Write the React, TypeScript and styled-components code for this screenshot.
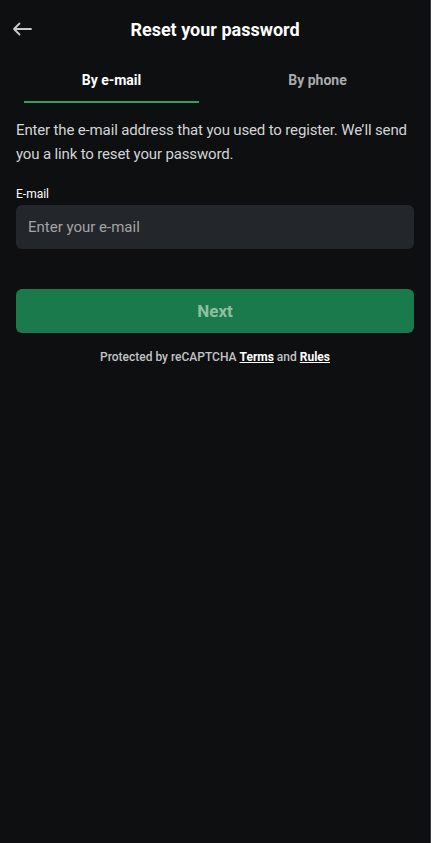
import React from "react";
import styled, { createGlobalStyle } from "styled-components";

const Global = createGlobalStyle`
  html, body { margin: 0; padding: 0; background: #0d0f11; }
  body { font-family: Roboto, "Noto Sans", sans-serif; }
  * { box-sizing: border-box; }
`;

const Page = styled.div`
  width: 431px;
  min-height: 843px;
  background: #0d0f11;
  border-right: 1px solid #3a3c3f;
  color: #fff;
`;

const Header = styled.header`
  height: 58px;
  display: grid;
  grid-template-columns: 44px 1fr 44px;
  align-items: center;
`;

const BackButton = styled.button`
  background: none;
  border: 0;
  padding: 0 0 0 12px;
  height: 58px;
  display: flex;
  align-items: center;
  color: #c9cacb;
  cursor: pointer;
`;

const Title = styled.h1`
  margin: 0;
  text-align: center;
  font-size: 18px;
  font-weight: 700;
  color: #fff;
`;

const Tabs = styled.div`
  display: grid;
  grid-template-columns: 175px 1fr;
  padding-left: 24px;
  height: 45px;
`;

const Tab = styled.div<{ $active?: boolean; $shift?: number }>`
  display: flex;
  align-items: center;
  justify-content: center;
  padding-left: ${(p) => p.$shift ?? 0}px;
  font-size: 14px;
  font-weight: 700;
  color: ${(p) => (p.$active ? "#ffffff" : "#a9abad")};
  border-bottom: 2px solid ${(p) => (p.$active ? "#2f9e63" : "transparent")};
`;

const Body = styled.main`
  padding: 15px 16px 0;
`;

const Description = styled.p`
  margin: 0;
  font-size: 15px;
  letter-spacing: -0.15px;
  line-height: 24px;
  color: #d3d4d5;
`;

const Label = styled.label`
  display: block;
  margin-top: 20px;
  font-size: 12px;
  line-height: 16px;
  color: #fff;
`;

const Input = styled.input`
  display: block;
  width: 100%;
  height: 44px;
  margin-top: 3px;
  border: 0;
  border-radius: 6px;
  background: #23262a;
  padding: 0 12px;
  font-family: Roboto, "Noto Sans", sans-serif;
  font-size: 15px;
  color: #fff;
  outline: none;
  &::placeholder { color: #a2a4a6; }
`;

const NextButton = styled.button`
  display: block;
  width: 100%;
  height: 44px;
  margin-top: 40px;
  border: 0;
  border-radius: 6px;
  background: #1a7a4c;
  color: #8fbf9f;
  font-family: Roboto, "Noto Sans", sans-serif;
  font-size: 17px;
  font-weight: 700;
`;

const Footer = styled.p`
  margin: 16px 0 0;
  text-align: center;
  font-size: 12px;
  font-weight: 500;
  line-height: 16px;
  color: #c3c4c5;
`;

const FootLink = styled.a`
  color: #fff;
  font-weight: 700;
  text-decoration: underline;
`;

export default function App() {
  return (
    <Page>
      <Global />
      <Header>
        <BackButton aria-label="Back">
          <svg width="20" height="14" viewBox="0 0 20 14" fill="none">
            <path d="M19 7H2M7.5 1.5L2 7l5.5 5.5" stroke="currentColor" strokeWidth="1.8" strokeLinecap="round" strokeLinejoin="round" />
          </svg>
        </BackButton>
        <Title>Reset your password</Title>
        <span />
      </Header>
      <Tabs>
        <Tab $active>By e-mail</Tab>
        <Tab $shift={6}>By phone</Tab>
      </Tabs>
      <Body>
        <Description>
          Enter the e-mail address that you used to register. We’ll send you a link to reset your password.
        </Description>
        <Label htmlFor="email">E-mail</Label>
        <Input id="email" placeholder="Enter your e-mail" />
        <NextButton>Next</NextButton>
        <Footer>
          Protected by reCAPTCHA <FootLink>Terms</FootLink> and <FootLink>Rules</FootLink>
        </Footer>
      </Body>
    </Page>
  );
}
